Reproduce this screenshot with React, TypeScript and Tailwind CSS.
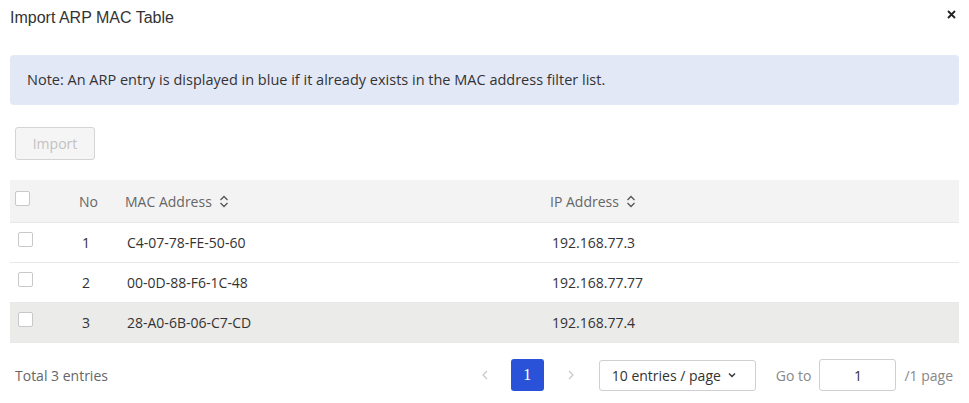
import React from 'react';

interface Row {
  no: number;
  mac: string;
  ip: string;
}

const rows: Row[] = [
  { no: 1, mac: 'C4-07-78-FE-50-60', ip: '192.168.77.3' },
  { no: 2, mac: '00-0D-88-F6-1C-48', ip: '192.168.77.77' },
  { no: 3, mac: '28-A0-6B-06-C7-CD', ip: '192.168.77.4' },
];

const SortIcon = () => (
  <svg width="10" height="13" viewBox="0 0 10 13" className="ml-[7px]" fill="none" stroke="#555" strokeWidth="1.3">
    <path d="M1.5 5 L5 1.5 L8.5 5" />
    <path d="M1.5 8 L5 11.5 L8.5 8" />
  </svg>
);

const Checkbox = () => (
  <span className="block w-[15px] h-[15px] border border-[#c8c8c8] rounded-[2px] bg-white" />
);

const App: React.FC = () => {
  return (
    <div className="w-[969px] h-[403px] bg-white text-[#333] overflow-hidden" style={{ fontFamily: '"Open Sans", "Liberation Sans", sans-serif' }}>
      {/* Header */}
      <div className="flex items-center justify-between pl-[10px] pr-[13px] h-[36px]">
        <h1 className="text-[16px] text-[#333]" style={{ fontFamily: '"Liberation Sans", Arial, sans-serif' }}>Import ARP MAC Table</h1>
        <svg width="9" height="9" viewBox="0 0 9 9" stroke="#222" strokeWidth="1.8" className="-mt-[8px]">
          <path d="M1 1 L8 8 M8 1 L1 8" />
        </svg>
      </div>

      {/* Note */}
      <div className="mx-[10px] mt-[19px] h-[50px] rounded-[4px] bg-[#e3e8f7] flex items-center pl-[17px] text-[14.5px] text-[#333]">
        Note: An ARP entry is displayed in blue if it already exists in the MAC address filter list.
      </div>

      {/* Import button */}
      <button className="ml-[15px] mt-[22px] w-[80px] h-[33px] border border-[#d4d4d4] rounded-[3px] bg-[#f5f5f5] text-[14px] text-[#c2c2c2]">
        Import
      </button>

      {/* Table */}
      <div className="mx-[10px] mt-[20px] text-[14px]">
        <div className="grid grid-cols-[60px_50px_425px_1fr] h-[43px] items-center bg-[#f3f3f3] border-b border-[#e8e8e8] text-[#666]">
          <div className="pl-[5px] -mt-[6px]"><Checkbox /></div>
          <div className="pl-[9px]">No</div>
          <div className="pl-[5px] flex items-center">MAC Address<SortIcon /></div>
          <div className="pl-[5px] flex items-center">IP Address<SortIcon /></div>
        </div>
        {rows.map((r) => (
          <div
            key={r.no}
            className={`grid grid-cols-[60px_50px_425px_1fr] h-[40px] items-center border-b border-[#e8e8e8] ${r.no === 3 ? 'bg-[#ebebea]' : 'bg-white'}`}
          >
            <div className="pl-[8px] -mt-[6px]"><Checkbox /></div>
            <div className="pl-[12px]">{r.no}</div>
            <div className="pl-[7px]">{r.mac}</div>
            <div className="pl-[7px]">{r.ip}</div>
          </div>
        ))}
      </div>

      {/* Footer */}
      <div className="flex items-center justify-between mt-[16px] pl-[15px] pr-[16px] text-[14px]">
        <span className="text-[#666]">Total 3 entries</span>
        <div className="flex items-center">
          <svg width="8" height="10" viewBox="0 0 8 10" fill="none" stroke="#c4c4c4" strokeWidth="1.1">
            <path d="M6 1 L2 5 L6 9" />
          </svg>
          <span className="ml-[22px] w-[33px] h-[32px] rounded-[3px] bg-[#2a52d9] text-white flex items-center justify-center text-[16px]" style={{ fontFamily: '"Liberation Serif", serif' }}>
            1
          </span>
          <svg width="8" height="10" viewBox="0 0 8 10" fill="none" stroke="#c4c4c4" strokeWidth="1.1" className="ml-[23px]">
            <path d="M2 1 L6 5 L2 9" />
          </svg>
          <div className="ml-[24px] w-[157px] h-[31px] border border-[#d0d0d0] rounded-[3px] flex items-center pl-[12px] text-[#333]">
            10 entries / page
            <svg width="8" height="6" viewBox="0 0 8 6" fill="none" stroke="#333" strokeWidth="1.4" className="ml-[7px]">
              <path d="M1 1.5 L4 4.5 L7 1.5" />
            </svg>
          </div>
          <span className="ml-[20px] text-[#888]">Go to</span>
          <div className="ml-[8px] w-[77px] h-[32px] border border-[#d0d0d0] rounded-[3px] flex items-center justify-center text-[#333]">
            1
          </div>
          <span className="ml-[8px] text-[#888]">/1 page</span>
        </div>
      </div>
    </div>
  );
};

export default App;
